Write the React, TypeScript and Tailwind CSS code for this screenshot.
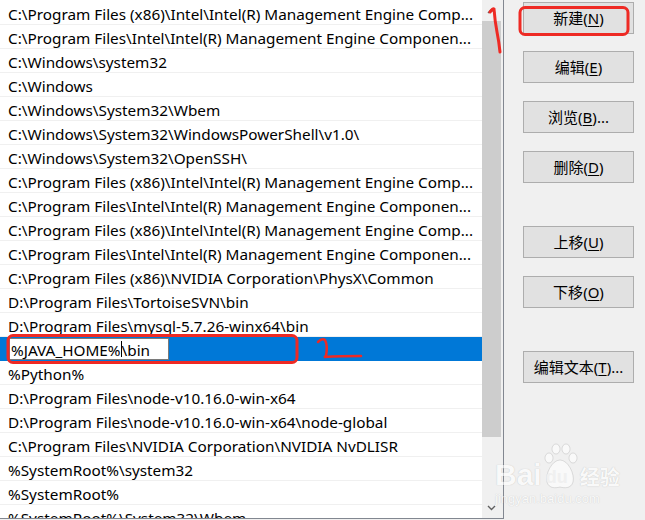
import React from "react";

const rows: string[] = [
  "C:\\Program Files (x86)\\Intel\\Intel(R) Management Engine Comp...",
  "C:\\Program Files\\Intel\\Intel(R) Management Engine Componen...",
  "C:\\Windows\\system32",
  "C:\\Windows",
  "C:\\Windows\\System32\\Wbem",
  "C:\\Windows\\System32\\WindowsPowerShell\\v1.0\\",
  "C:\\Windows\\System32\\OpenSSH\\",
  "C:\\Program Files (x86)\\Intel\\Intel(R) Management Engine Comp...",
  "C:\\Program Files\\Intel\\Intel(R) Management Engine Componen...",
  "C:\\Program Files (x86)\\Intel\\Intel(R) Management Engine Comp...",
  "C:\\Program Files\\Intel\\Intel(R) Management Engine Componen...",
  "C:\\Program Files (x86)\\NVIDIA Corporation\\PhysX\\Common",
  "D:\\Program Files\\TortoiseSVN\\bin",
  "D:\\Program Files\\mysql-5.7.26-winx64\\bin",
  "__EDIT__",
  "%Python%",
  "D:\\Program Files\\node-v10.16.0-win-x64",
  "D:\\Program Files\\node-v10.16.0-win-x64\\node-global",
  "C:\\Program Files\\NVIDIA Corporation\\NVIDIA NvDLISR",
  "%SystemRoot%\\system32",
  "%SystemRoot%",
  "%SystemRoot%\\System32\\Wbem",
];

function Btn({ label, u, after, className }: { label: string; u: string; after: string; className?: string }) {
  return (
    <div
      className={
        "w-[111px] h-[32px] bg-[#e1e1e1] border border-[#adadad] flex items-center justify-center text-[15px] text-black " +
        (className ?? "")
      }
    >
      <span>
        {label}(<span className="underline underline-offset-2">{u}</span>){after}
      </span>
    </div>
  );
}

export default function App() {
  return (
    <div
      className="relative w-[645px] h-[520px] bg-[#f0f0f0] flex overflow-hidden"
      style={{ fontFamily: '"Noto Sans", "Noto Sans CJK SC", sans-serif' }}
    >
      {/* list box */}
      <div className="w-[504px] h-[519px] bg-white border-r border-b border-[#828790] flex">
        <div className="w-[482px] h-full overflow-hidden pt-[1px]">
          {rows.map((r, i) =>
            r === "__EDIT__" ? (
              <div key={i} className="h-[24px] bg-[#0078d7] flex items-center pl-[9px]">
                <div className="w-[160px] h-[22px] bg-white border border-[#7a7a7a] flex items-center pl-[1px] pt-[3px] text-[15.3px] text-black leading-none">
                  <span>%JAVA_HOME%</span>
                  <span className="w-px h-[16px] bg-black -mt-[3px]" />
                  <span>\bin</span>
                </div>
              </div>
            ) : (
              <div
                key={i}
                className="h-[24px] border-b border-[#f0f0f0] flex items-center pl-[8px] pt-[4px] text-[15.3px] text-black whitespace-nowrap leading-none"
              >
                {r}
              </div>
            )
          )}
        </div>
        {/* scrollbar */}
        <div className="w-[21px] h-full bg-[#f0f0f0] flex flex-col">
          <div className="h-[21px] w-[19px] flex items-center justify-center">
            <svg width="9" height="6" viewBox="0 0 9 6">
              <path d="M1 5 L4.5 1.5 L8 5" fill="none" stroke="#606060" strokeWidth="1.4" />
            </svg>
          </div>
          <div className="w-[19px] h-[416px] bg-[#cdcdcd]" />
          <div className="flex-1" />
          <div className="h-[21px] w-[19px] flex items-center justify-center">
            <svg width="9" height="6" viewBox="0 0 9 6">
              <path d="M1 1 L4.5 4.5 L8 1" fill="none" stroke="#606060" strokeWidth="1.4" />
            </svg>
          </div>
        </div>
      </div>

      {/* buttons */}
      <div className="flex flex-col pl-[19px] pt-[2px]">
        <Btn label="新建" u="N" after="" />
        <Btn label="编辑" u="E" after="" className="mt-[17px]" />
        <Btn label="浏览" u="B" after="..." className="mt-[18px]" />
        <Btn label="删除" u="D" after="" className="mt-[18px]" />
        <Btn label="上移" u="U" after="" className="mt-[43px]" />
        <Btn label="下移" u="O" after="" className="mt-[18px]" />
        <Btn label="编辑文本" u="T" after="..." className="mt-[43px]" />
      </div>

      {/* red annotations */}
      <svg className="absolute left-0 top-0 pointer-events-none" width="645" height="520" viewBox="0 0 645 520">
        <rect x="520" y="7.5" width="108" height="27" rx="5" fill="none" stroke="#ee2a24" strokeWidth="3" />
        <rect x="8" y="335.5" width="289" height="27" rx="5" fill="none" stroke="#ee2a24" strokeWidth="3" />
        <path d="M490 12 Q493 8 494 9 Q495 22 497 32 Q499 42 500 52" fill="none" stroke="#ee2a24" strokeWidth="3" strokeLinecap="round" />
        <path d="M318 342 Q322 338 325 340 Q328 346 326 356 L324 357 Q340 356 361 356" fill="none" stroke="#ee2a24" strokeWidth="2.5" strokeLinecap="round" />
      </svg>

      {/* watermark */}
      <div className="absolute left-[495px] top-[440px] pointer-events-none flex flex-col items-start opacity-60">
        <div className="flex items-end">
          <span
            className="text-[30px] font-bold leading-none text-white [text-shadow:0_0_1px_rgba(0,0,0,0.35)]"
            style={{ fontFamily: '"Liberation Sans", sans-serif' }}
          >
            Bai
          </span>
          <div className="relative w-[36px] h-[50px]">
            <svg className="absolute left-0 top-0" width="36" height="50" viewBox="0 0 36 50">
              <g fill="#ffffff" stroke="rgba(0,0,0,0.18)" strokeWidth="1">
                <ellipse cx="7" cy="18" rx="4" ry="5" />
                <ellipse cx="14" cy="9" rx="4" ry="5" />
                <ellipse cx="24" cy="9" rx="4" ry="5" />
                <ellipse cx="31" cy="18" rx="4" ry="5" />
                <path d="M18 20 C10 20 3 34 5 42 C7 49 14 48 18 47 C22 48 29 49 31 42 C33 34 26 20 18 20 Z" />
              </g>
            </svg>
            <span
              className="absolute left-[4px] top-[28px] text-[18px] font-bold leading-none text-[#f0f0f0]"
              style={{ fontFamily: '"Liberation Sans", sans-serif' }}
            >
              du
            </span>
          </div>
          <span className="text-[20px] font-bold leading-none text-white ml-[2px] mb-[2px] [text-shadow:0_0_1px_rgba(0,0,0,0.35)]">
            经验
          </span>
        </div>
        <span
          className="text-[13px] leading-none mt-[2px] text-white [text-shadow:0_0_1px_rgba(0,0,0,0.3)]"
          style={{ fontFamily: '"Liberation Sans", sans-serif' }}
        >
          jingyan.baidu.com
        </span>
      </div>
    </div>
  );
}
